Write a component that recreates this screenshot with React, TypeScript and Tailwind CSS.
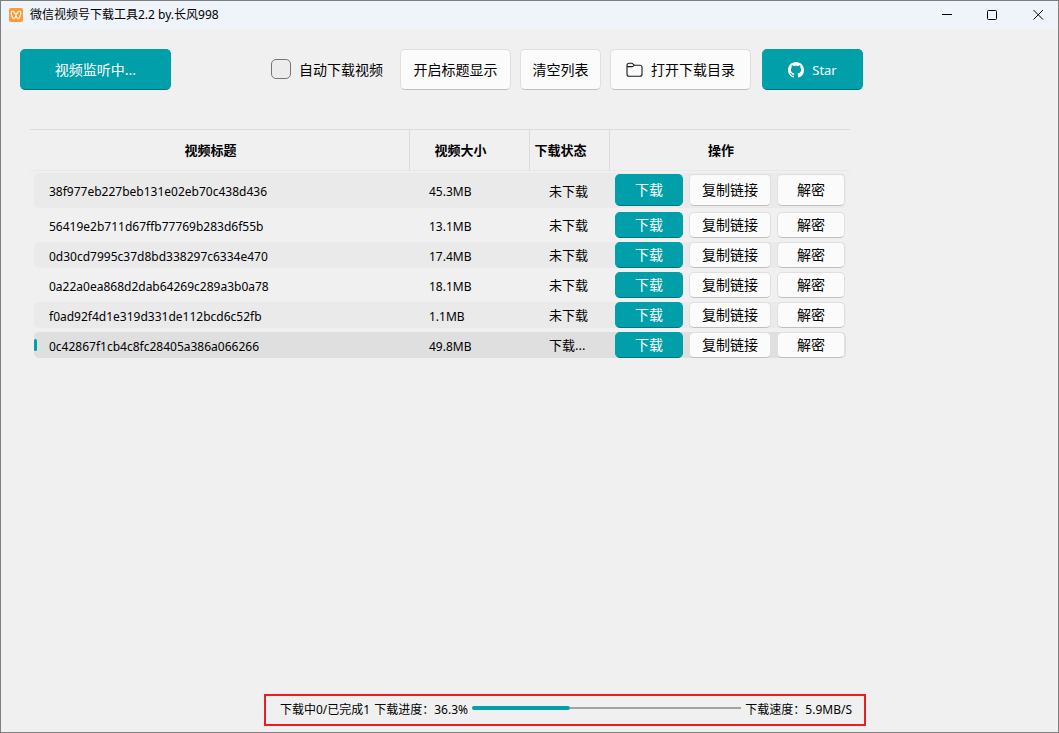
import React from 'react'
import clsx from 'clsx'

type Video = {
  id: string
  size: string
  status: string
}

const videos: Video[] = [
  { id: '38f977eb227beb131e02eb70c438d436', size: '45.3MB', status: '未下载' },
  { id: '56419e2b711d67ffb77769b283d6f55b', size: '13.1MB', status: '未下载' },
  { id: '0d30cd7995c37d8bd338297c6334e470', size: '17.4MB', status: '未下载' },
  { id: '0a22a0ea868d2dab64269c289a3b0a78', size: '18.1MB', status: '未下载' },
  { id: 'f0ad92f4d1e319d331de112bcd6c52fb', size: '1.1MB', status: '未下载' },
  { id: '0c42867f1cb4c8fc28405a386a066266', size: '49.8MB', status: '下载...' },
]

const selectedId = '0c42867f1cb4c8fc28405a386a066266'
const progress = 36.3

function AppLogo() {
  return (
    <svg className="h-3.5 w-3.5" viewBox="0 0 14 14" fill="none" aria-hidden="true">
      <rect width="14" height="14" rx="2" fill="#fb9c38" />
      <path
        d="M7 7.4C6.2 5.2 4.4 3.2 3 3.4C1.6 3.7 2.4 6.6 3 8.3C3.5 9.9 4.1 10.8 5 10.5C6 10.1 6.8 8.8 7 7.4ZM7 7.4C7.8 5.2 9.6 3.2 11 3.4C12.4 3.7 11.6 6.6 11 8.3C10.5 9.9 9.9 10.8 9 10.5C8 10.1 7.2 8.8 7 7.4Z"
        stroke="#fff3e4"
        strokeWidth="1.2"
        strokeLinejoin="round"
      />
    </svg>
  )
}

function FolderIcon() {
  return (
    <svg className="h-4 w-[17px]" viewBox="0 0 17 16" fill="none" stroke="#1a1a1a" aria-hidden="true">
      <path d="M1 4V12.3A2 2 0 0 0 3 14.3H14A2 2 0 0 0 16 12.3V5.2A2 2 0 0 0 14 3.2H8.3L6.9 1.8A1.6 1.6 0 0 0 5.8 1.3H3A2 2 0 0 0 1 3.3V4.6H6A2 2 0 0 0 7.3 4.1L8.3 3.2" strokeWidth="1.1" strokeLinejoin="round" />
    </svg>
  )
}

function GithubIcon() {
  return (
    <svg className="h-4 w-4" viewBox="0 0 16 16" fill="currentColor" aria-hidden="true">
      <path d="M8 0C3.58 0 0 3.58 0 8c0 3.54 2.29 6.53 5.47 7.59.4.07.55-.17.55-.38 0-.19-.01-.82-.01-1.49-2.01.37-2.53-.49-2.69-.94-.09-.23-.48-.94-.82-1.13-.28-.15-.68-.52-.01-.53.63-.01 1.08.58 1.23.82.72 1.21 1.87.87 2.33.66.07-.52.28-.87.51-1.07-1.78-.2-3.64-.89-3.64-3.95 0-.87.31-1.59.82-2.15-.08-.2-.36-1.02.08-2.12 0 0 .67-.21 2.2.82.64-.18 1.32-.27 2-.27s1.36.09 2 .27c1.53-1.04 2.2-.82 2.2-.82.44 1.1.16 1.92.08 2.12.51.56.82 1.27.82 2.15 0 3.07-1.87 3.75-3.65 3.95.29.25.54.73.54 1.48 0 1.07-.01 1.93-.01 2.2 0 .21.15.46.55.38A8.01 8.01 0 0 0 16 8c0-4.42-3.58-8-8-8z" />
    </svg>
  )
}

type ButtonProps = {
  primary?: boolean
  className?: string
  children: React.ReactNode
}

function Button({ primary, className, children }: ButtonProps) {
  return (
    <button
      type="button"
      className={clsx(
        'flex shrink-0 items-center justify-center rounded-[5px] border text-sm leading-5 whitespace-nowrap',
        primary
          ? 'border-[#009faa] border-b-[#007780] bg-[#009faa] text-white'
          : 'border-[#dfdfdf] border-b-[#bfbfbf] bg-[#fbfbfb] text-black',
        className,
      )}
    >
      {children}
    </button>
  )
}

function TitleBar() {
  return (
    <header className="flex h-7 items-center bg-[#eff3fa] pr-1.5 pl-2">
      <AppLogo />
      <h1 className="ml-[7px] flex-1 text-xs leading-4">微信视频号下载工具2.2 by.长风998</h1>
      <div className="flex gap-[18px]">
        <button type="button" aria-label="最小化" className="flex h-7 w-7 items-center justify-center">
          <svg className="h-[11px] w-[11px]" viewBox="0 0 11 11" stroke="#000">
            <path d="M1 4.5H11" />
          </svg>
        </button>
        <button type="button" aria-label="最大化" className="flex h-7 w-7 items-center justify-center">
          <svg className="h-[11px] w-[11px]" viewBox="0 0 11 11" fill="none" stroke="#000">
            <rect x="0.5" y="0.5" width="9" height="9" rx="1" />
          </svg>
        </button>
        <button type="button" aria-label="关闭" className="flex h-7 w-7 items-center justify-center">
          <svg className="h-[11px] w-[11px]" viewBox="0 0 11 11" stroke="#000">
            <path d="M0.5 0L10 9.5M10 0L0.5 9.5" />
          </svg>
        </button>
      </div>
    </header>
  )
}

function Toolbar() {
  return (
    <div className="flex items-center pt-5 pl-[19px]">
      <Button primary className="h-[41px] w-[151px]">视频监听中...</Button>
      <label className="ml-[100px] flex shrink-0 items-center gap-2 text-sm leading-5">
        <input
          type="checkbox"
          className="mb-0.5 h-5 w-5 appearance-none rounded-[5px] border border-[#767676] bg-[#ececec] checked:bg-[#009faa]"
        />
        自动下载视频
      </label>
      <div className="ml-[17px] flex gap-[9px]">
        <Button className="h-[41px] w-[111px]">开启标题显示</Button>
        <Button className="h-[41px] w-[81px]">清空列表</Button>
        <Button className="h-[41px] w-[141px] gap-2">
          <FolderIcon />
          打开下载目录
        </Button>
      </div>
      <Button primary className="ml-[11px] h-[41px] w-[101px] gap-2">
        <GithubIcon />
        <span className="text-[13px]">Star</span>
      </Button>
    </div>
  )
}

function VideoRow({ video, index }: { video: Video; index: number }) {
  const first = index === 0
  const selected = video.id === selectedId
  // striped background lives in the cells so a gap stays between rows
  const cell = clsx(
    'my-0.5 flex items-center',
    first ? 'h-[35px]' : 'h-[26px]',
    selected ? 'bg-[#dfdfdf]' : index % 2 === 0 ? 'bg-[#eaeaea]' : 'bg-transparent',
  )
  const buttonHeight = first ? 'h-8' : 'h-[26px]'
  const buttonFill = selected && 'bg-[#f6f6f6]'

  return (
    <tr>
      <td className="p-0 pl-1">
        <div className={clsx(cell, 'rounded-l-[5px]')}>
          <span className={clsx('mr-3 h-3 w-[3px] rounded-sm', selected && 'bg-[#009faa]')} />
          <span className="pt-[3px]">{video.id}</span>
        </div>
      </td>
      <td className="p-0">
        <div className={clsx(cell, 'pt-[3px] pl-[19px]')}>{video.size}</div>
      </td>
      <td className="p-0">
        <div className={clsx(cell, 'pt-0.5 pl-[19px] text-[13px]')}>{video.status}</div>
      </td>
      <td className="p-0 pr-1">
        <div className={clsx(cell, 'gap-1.5 rounded-r-[5px] pl-[5px]', first && 'pb-px')}>
          <Button primary className={clsx(buttonHeight, 'w-[68px]')}>下载</Button>
          <Button className={clsx(buttonHeight, buttonFill, 'w-[82px]')}>复制链接</Button>
          <Button className={clsx(buttonHeight, buttonFill, 'w-[68px]')}>解密</Button>
        </div>
      </td>
    </tr>
  )
}

function VideoTable() {
  return (
    <table className="mt-[39px] ml-[29px] w-[820px] table-fixed border-separate border-spacing-0 text-xs">
      <colgroup>
        <col className="w-[380px]" />
        <col className="w-[120px]" />
        <col className="w-[80px]" />
        <col className="w-[240px]" />
      </colgroup>
      <thead>
        <tr className="h-[42px] text-[13px]">
          <th className="border-t border-r border-b border-t-[#dcdcdc] border-r-[#dcdcdc] border-b-[#e8e8e8] p-0 pt-0.5 pr-[18px]">视频标题</th>
          <th className="border-t border-r border-b border-t-[#dcdcdc] border-r-[#dcdcdc] border-b-[#e8e8e8] p-0 pt-0.5 pr-[18px]">视频大小</th>
          <th className="border-t border-r border-b border-t-[#dcdcdc] border-r-[#dcdcdc] border-b-[#e8e8e8] p-0 pt-0.5 pr-[18px]">下载状态</th>
          <th className="border-t border-b border-t-[#dcdcdc] border-b-[#e8e8e8] p-0 pt-0.5 pr-[18px]">操作</th>
        </tr>
      </thead>
      <tbody>
        {videos.map((video, index) => (
          <VideoRow key={video.id} video={video} index={index} />
        ))}
      </tbody>
    </table>
  )
}

function StatusBar() {
  return (
    <footer className="mt-auto mb-1.5 ml-[263px] flex h-8 w-[602px] items-center border-2 border-[#ed1c24] pr-3 pl-3.5 text-xs">
      <span>下载中0/已完成1</span>
      <span className="ml-1">下载进度：36.3%</span>
      <div
        role="progressbar"
        aria-label="下载进度"
        aria-valuenow={progress}
        aria-valuemin={0}
        aria-valuemax={100}
        className="mx-1 mb-1 flex h-1 flex-1 items-center"
      >
        <div className="h-1 rounded-full bg-[#009faa]" style={{ width: `${progress}%` }} />
        <div className="h-0.5 flex-1 bg-[#a3a3a3]" />
      </div>
      <span>下载速度：5.9MB/S</span>
    </footer>
  )
}

export default function App() {
  return (
    <div className="flex min-h-screen flex-col border border-[#7f7f7f] bg-[#f0f0f0] font-['Noto_Sans','Noto_Sans_CJK_SC',sans-serif] text-black">
      <TitleBar />
      <main>
        <Toolbar />
        <VideoTable />
      </main>
      <StatusBar />
    </div>
  )
}
